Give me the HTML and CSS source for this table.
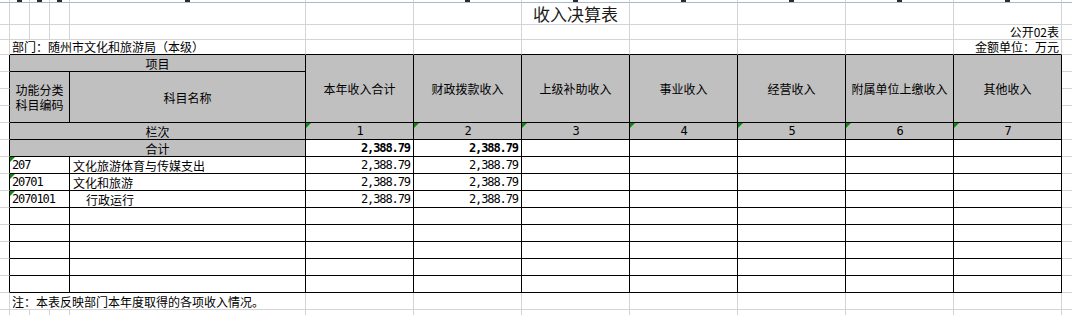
FILE: index.html
```html
<!DOCTYPE html>
<html lang="zh-CN">
<head>
<meta charset="utf-8">
<title>收入决算表</title>
<link rel="stylesheet" href="styles.css">
</head>
<body>
<table class="sheet">
  <colgroup>
    <col class="w10"><col class="w20"><col class="w20"><col class="w20"><col class="w236">
    <col class="w108"><col class="w108"><col class="w108"><col class="w108"><col class="w108"><col class="w108"><col class="w108">
    <col class="w10">
  </colgroup>
  <tr class="r0">
    <td></td><td><i class="tip"></i></td><td><i class="tip"></i></td><td><i class="tip"></i></td><td><i class="tip"></i></td>
    <td></td><td><i class="tip"></i></td><td><i class="tip"></i></td><td><i class="tip"></i></td><td><i class="tip"></i></td><td><i class="tip"></i></td><td><i class="tip"></i></td>
    <td class="nr"></td>
  </tr>
  <tr class="r1">
    <td></td><td></td><td></td><td></td><td></td>
    <td></td><td></td><td class="title">收入决算表</td><td></td><td></td><td></td><td></td>
    <td class="nr"></td>
  </tr>
  <tr class="r2">
    <td></td><td></td><td></td><td></td><td></td>
    <td></td><td></td><td></td><td></td><td></td><td></td><td class="right">公开02表</td>
    <td class="nr"></td>
  </tr>
  <tr class="r2">
    <td></td><td colspan="4" class="top dept">部门：随州市文化和旅游局（本级）</td>
    <td class="top"></td><td class="top"></td><td class="top"></td><td class="top"></td><td class="top"></td><td class="top"></td><td class="top right">金额单位：万元</td>
    <td class="nr"></td>
  </tr>
  <tr class="r">
    <td class="edge"></td><td colspan="4" class="b hd">项目</td>
    <td rowspan="4" class="b hd">本年收入合计</td>
    <td rowspan="4" class="b hd">财政拨款收入</td>
    <td rowspan="4" class="b hd">上级补助收入</td>
    <td rowspan="4" class="b hd">事业收入</td>
    <td rowspan="4" class="b hd">经营收入</td>
    <td rowspan="4" class="b hd">附属单位上缴收入</td>
    <td rowspan="4" class="b hd">其他收入</td>
    <td class="nr"></td>
  </tr>
  <tr class="r">
    <td class="edge"></td>
    <td colspan="3" rowspan="3" class="b hd two">功能分类<br>科目编码</td>
    <td rowspan="3" class="b hd">科目名称</td>
    <td class="nr"></td>
  </tr>
  <tr class="r"><td class="edge"></td><td class="nr"></td></tr>
  <tr class="r"><td class="edge"></td><td class="nr"></td></tr>
  <tr class="r">
    <td class="edge"></td><td colspan="4" class="b hd">栏次</td>
    <td class="b hd idx tri">1</td><td class="b hd idx tri">2</td><td class="b hd idx tri">3</td><td class="b hd idx tri">4</td><td class="b hd idx tri">5</td><td class="b hd idx tri">6</td><td class="b hd idx tri">7</td>
    <td class="nr"></td>
  </tr>
  <tr class="r">
    <td class="edge"></td><td colspan="4" class="b hd">合计</td>
    <td class="b num bold">2,388.79</td><td class="b num bold">2,388.79</td>
    <td class="b"></td><td class="b"></td><td class="b"></td><td class="b"></td><td class="b"></td>
    <td class="nr"></td>
  </tr>
  <tr class="r">
    <td class="edge"></td><td colspan="3" class="b code tri">207</td><td class="b name">文化旅游体育与传媒支出</td>
    <td class="b num">2,388.79</td><td class="b num">2,388.79</td>
    <td class="b"></td><td class="b"></td><td class="b"></td><td class="b"></td><td class="b"></td>
    <td class="nr"></td>
  </tr>
  <tr class="r">
    <td class="edge"></td><td colspan="3" class="b code tri">20701</td><td class="b name">文化和旅游</td>
    <td class="b num">2,388.79</td><td class="b num">2,388.79</td>
    <td class="b"></td><td class="b"></td><td class="b"></td><td class="b"></td><td class="b"></td>
    <td class="nr"></td>
  </tr>
  <tr class="r">
    <td class="edge"></td><td colspan="3" class="b code tri">2070101</td><td class="b name indent">行政运行</td>
    <td class="b num">2,388.79</td><td class="b num">2,388.79</td>
    <td class="b"></td><td class="b"></td><td class="b"></td><td class="b"></td><td class="b"></td>
    <td class="nr"></td>
  </tr>
  <tr class="r">
    <td class="edge"></td><td colspan="3" class="b"></td><td class="b"></td>
    <td class="b"></td><td class="b"></td><td class="b"></td><td class="b"></td><td class="b"></td><td class="b"></td><td class="b"></td>
    <td class="nr"></td>
  </tr>
  <tr class="r">
    <td class="edge"></td><td colspan="3" class="b"></td><td class="b"></td>
    <td class="b"></td><td class="b"></td><td class="b"></td><td class="b"></td><td class="b"></td><td class="b"></td><td class="b"></td>
    <td class="nr"></td>
  </tr>
  <tr class="r">
    <td class="edge"></td><td colspan="3" class="b"></td><td class="b"></td>
    <td class="b"></td><td class="b"></td><td class="b"></td><td class="b"></td><td class="b"></td><td class="b"></td><td class="b"></td>
    <td class="nr"></td>
  </tr>
  <tr class="r">
    <td class="edge"></td><td colspan="3" class="b"></td><td class="b"></td>
    <td class="b"></td><td class="b"></td><td class="b"></td><td class="b"></td><td class="b"></td><td class="b"></td><td class="b"></td>
    <td class="nr"></td>
  </tr>
  <tr class="r">
    <td class="edge"></td><td colspan="3" class="b"></td><td class="b"></td>
    <td class="b"></td><td class="b"></td><td class="b"></td><td class="b"></td><td class="b"></td><td class="b"></td><td class="b"></td>
    <td class="nr"></td>
  </tr>
  <tr class="r">
    <td></td><td colspan="4" class="note">注：本表反映部门本年度取得的各项收入情况。</td>
    <td></td><td></td><td></td><td></td><td></td><td></td><td></td>
    <td class="nr"></td>
  </tr>
  <tr class="r">
    <td></td><td></td><td></td><td></td><td></td>
    <td></td><td></td><td></td><td></td><td></td><td></td><td></td>
    <td class="nr"></td>
  </tr>
</table>
</body>
</html>
```
FILE: styles.css
```css
html, body {
  margin: 0;
  padding: 0;
  background: #ffffff;
  overflow: hidden;
}

.sheet {
  border-collapse: separate;
  border-spacing: 0;
  table-layout: fixed;
  width: 1072px;
  font-family: "Noto Sans CJK SC", "Noto Sans", sans-serif;
  font-size: 12px;
  color: #000000;
}

.w10 { width: 10px; }
.w20 { width: 20px; }
.w236 { width: 236px; }
.w108 { width: 108px; }

.sheet td {
  padding: 0;
  border-right: 1px solid #d4d4d4;
  border-bottom: 1px solid #d4d4d4;
  line-height: 14px;
  white-space: nowrap;
  overflow: visible;
  vertical-align: bottom;
}

.sheet td.nr { border-right: none; }

/* rows */
.r0 { height: 3px; }
.r0 td {
  font-size: 0;
  line-height: 0;
  text-align: center;
  vertical-align: top;
  border-bottom-color: #a7b9d0;
}
.tip {
  display: inline-block;
  width: 5px;
  height: 2px;
  background: #2b2b2b;
  vertical-align: top;
}

.r1 { height: 22px; }
.r2 { height: 15px; }
.r { height: 17px; }
.r td { line-height: 15px; }

.title {
  font-size: 17px;
  line-height: 20px !important;
  text-align: center;
  vertical-align: middle !important;
  color: #1c1c1c;
}

.right {
  text-align: right;
  padding-right: 2px !important;
}

.dept { padding-left: 2px !important; }

.sheet td.top { border-bottom-color: #000000; }
.sheet td.edge { border-right-color: #000000; }
.sheet td.b {
  border-right-color: #000000;
  border-bottom-color: #000000;
}

.hd {
  background: #c0c0c0;
  text-align: center;
  vertical-align: middle !important;
}
.two { line-height: 15px; }

.idx,
.num,
.code {
  font-family: "DejaVu Sans Mono", "Liberation Mono", monospace;
  font-size: 12px;
  letter-spacing: -1.1px;
}

.num {
  text-align: right;
  padding-right: 3px !important;
}
.bold { font-weight: bold; }

.code { padding-left: 2px !important; }
.name { padding-left: 3px !important; }
.indent { padding-left: 16px !important; }

.note { padding-left: 2px !important; }

.tri { position: relative; }
.tri::before {
  content: "";
  position: absolute;
  left: 0;
  top: 0;
  width: 0;
  height: 0;
  border-top: 5px solid #0b8a0b;
  border-right: 5px solid transparent;
}
```
